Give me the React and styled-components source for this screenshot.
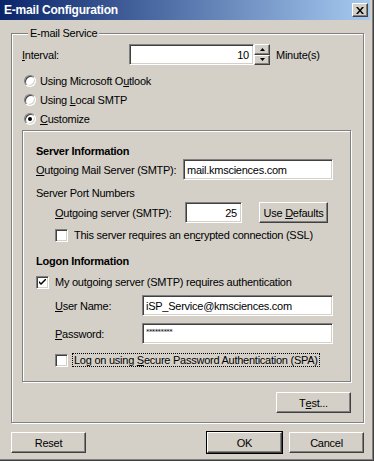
import React from "react";
import styled, { createGlobalStyle, css } from "styled-components";

const GlobalStyle = createGlobalStyle`
  html, body {
    margin: 0;
    padding: 0;
    background: #d4d0c8;
  }
  body {
    font-family: "Liberation Sans", Arial, sans-serif;
    font-size: 11px;
    letter-spacing: -0.25px;
    color: #000;
  }
  * {
    box-sizing: border-box;
  }
`;

const sunken = css`
  border: 1px solid;
  border-color: #808080 #ffffff #ffffff #808080;
  box-shadow: inset 1px 1px 0 #404040, inset -1px -1px 0 #d4d0c8;
`;

const raised = css`
  border: 1px solid;
  border-color: #ffffff #404040 #404040 #ffffff;
  box-shadow: inset -1px -1px 0 #808080, inset 1px 1px 0 #d4d0c8;
  background: #d4d0c8;
`;

const Window = styled.div`
  width: 374px;
  height: 461px;
  background: #d4d0c8;
  border-right: 1px solid #404040;
  border-bottom: 1px solid #404040;
  box-shadow: inset -1px -1px 0 #808080;
  display: flex;
  flex-direction: column;
  padding-right: 3px;
`;

const TitleBar = styled.div`
  height: 20px;
  display: flex;
  align-items: center;
  justify-content: space-between;
  padding: 0 2px 0 4px;
  background: linear-gradient(to right, #0a246a, #a6caf0);
`;

const Title = styled.span`
  color: #fff;
  font-weight: bold;
  font-size: 12px;
  letter-spacing: -0.2px;
`;

const CloseButton = styled.div`
  ${raised};
  width: 16px;
  height: 14px;
  display: flex;
  align-items: center;
  justify-content: center;
`;

const Body = styled.div`
  flex: 1;
  display: flex;
  flex-direction: column;
  padding: 7px 6px 0 11px;
`;

const Group = styled.fieldset`
  margin: 0;
  padding: 4px 12px 9px 10px;
  border: 1px solid #808080;
  box-shadow: inset 1px 1px 0 #fff, 1px 1px 0 #fff;
  display: flex;
  flex-direction: column;
`;

const Legend = styled.legend`
  margin-left: 6px;
  padding: 0 2px;
  line-height: 13px;
  background: #d4d0c8;
`;

const Row = styled.div`
  display: flex;
  align-items: center;
  height: ${(p) => p.$h || 21}px;
  margin-top: ${(p) => p.$mt || 0}px;
  padding-left: ${(p) => p.$indent || 0}px;
`;

const Label = styled.span`
  width: ${(p) => (p.$w ? `${p.$w}px` : "auto")};
  flex: none;
  white-space: nowrap;
`;

const TextBox = styled.div`
  ${sunken};
  background: #fff;
  width: ${(p) => p.$w}px;
  height: 21px;
  display: flex;
  align-items: center;
  justify-content: ${(p) => (p.$right ? "flex-end" : "flex-start")};
  padding: 0 4px 0 3px;
  white-space: nowrap;
`;

const Masked = styled.span`
  font-family: "DejaVu Sans", sans-serif;
  font-size: 7px;
  letter-spacing: -0.6px;
  margin-top: -3px;
`;

const Spinner = styled.div`
  display: flex;
  flex-direction: column;
  width: 16px;
  height: 21px;
  margin-right: 6px;
`;

const SpinButton = styled.div`
  ${raised};
  flex: 1;
  display: flex;
  align-items: center;
  justify-content: center;
`;

const RadioList = styled.div`
  margin-top: 6px;
`;

const RadioRow = styled.label`
  display: flex;
  align-items: center;
  height: 19px;
  padding-left: 2px;
  gap: 4px;
`;

const RadioCircle = styled.span`
  width: 12px;
  height: 12px;
  border-radius: 50%;
  border: 1px solid;
  border-color: #808080 #ffffff #ffffff #808080;
  box-shadow: inset 1px 1px 0 #404040, inset -1px -1px 0 #d4d0c8;
  background: #fff;
  display: flex;
  align-items: center;
  justify-content: center;
  &::after {
    content: "";
    width: 4px;
    height: 4px;
    border-radius: 50%;
    background: ${(p) => (p.$on ? "#000" : "transparent")};
  }
`;

const InnerGroup = styled.div`
  margin-top: 2px;
  border: 1px solid #808080;
  box-shadow: inset 1px 1px 0 #fff, 1px 1px 0 #fff;
  padding: 13px 16px 13px 13px;
  display: flex;
  flex-direction: column;
`;

const Heading = styled.div`
  font-weight: bold;
  height: 14px;
  line-height: 14px;
  margin-top: ${(p) => p.$mt || 0}px;
`;

const CheckRow = styled.label`
  display: flex;
  align-items: center;
  gap: 5px;
  height: 16px;
  margin-top: ${(p) => p.$mt || 0}px;
  padding-left: ${(p) => p.$indent || 0}px;
`;

const CheckBox = styled.span`
  ${sunken};
  width: 13px;
  height: 13px;
  background: #fff;
  flex: none;
  display: flex;
  align-items: center;
  justify-content: center;
`;

const CheckText = styled.span`
  padding: 0 1px;
  outline: ${(p) => (p.$focus ? "1px dotted #000" : "none")};
  white-space: nowrap;
`;

const Button = styled.div`
  ${raised};
  width: ${(p) => p.$w || 75}px;
  height: 21px;
  display: flex;
  align-items: center;
  justify-content: center;
  margin-left: ${(p) => p.$ml || 0}px;
  ${(p) =>
    p.$default &&
    css`
      outline: 1px solid #000;
      outline-offset: 0;
    `}
`;

const TestRow = styled.div`
  display: flex;
  justify-content: flex-end;
  margin-top: 10px;
`;

const Footer = styled.div`
  display: flex;
  align-items: center;
  margin-top: 9px;
`;

const Spacer = styled.div`
  flex: 1;
`;

const Arrow = ({ down }) => (
  <svg width="5" height="3" viewBox="0 0 5 3">
    <path d={down ? "M0 0h5L2.5 3z" : "M2.5 0L5 3H0z"} fill="#000" />
  </svg>
);

const Check = () => (
  <svg width="7" height="7" viewBox="0 0 7 7">
    <path d="M0 2 L0 4 L2 6 L7 1 L7 -1 L2 4 Z" fill="#000" />
  </svg>
);

const radios = [
  { label: <>Using Microsoft O<u>u</u>tlook</>, on: false },
  { label: <>Using <u>L</u>ocal SMTP</>, on: false },
  { label: <><u>C</u>ustomize</>, on: true },
];

export default function App() {
  return (
    <>
      <GlobalStyle />
      <Window>
        <TitleBar>
          <Title>E-mail Configuration</Title>
          <CloseButton>
            <svg width="8" height="7" viewBox="0 0 8 7">
              <path d="M0 0h2l2 2.5L6 0h2L5 3.5 8 7H6L4 4.5 2 7H0l3-3.5z" fill="#000" />
            </svg>
          </CloseButton>
        </TitleBar>
        <Body>
          <Group>
            <Legend>E-mail Service</Legend>
            <Row>
              <Label $w={107}>
                <u>I</u>nterval:
              </Label>
              <TextBox $w={125} $right>
                10
              </TextBox>
              <Spinner>
                <SpinButton>
                  <Arrow />
                </SpinButton>
                <SpinButton>
                  <Arrow down />
                </SpinButton>
              </Spinner>
              <Label>Minute(s)</Label>
            </Row>
            <RadioList>
              {radios.map((r, i) => (
                <RadioRow key={i}>
                  <RadioCircle $on={r.on} />
                  <span>{r.label}</span>
                </RadioRow>
              ))}
            </RadioList>
            <InnerGroup>
              <Heading>Server Information</Heading>
              <Row $mt={1}>
                <Label $w={147}>
                  <u>O</u>utgoing Mail Server (SMTP):
                </Label>
                <TextBox $w={150}>mail.kmsciences.com</TextBox>
              </Row>
              <Row $h={14} $mt={6}>
                <Label>Server Port Numbers</Label>
              </Row>
              <Row $mt={2} $indent={19}>
                <Label $w={130}>
                  <u>O</u>utgoing server (SMTP):
                </Label>
                <TextBox $w={57} $right>
                  25
                </TextBox>
                <Button $w={69} $ml={17}>
                  Use&nbsp;<u>D</u>efaults
                </Button>
              </Row>
              <CheckRow $mt={4} $indent={19}>
                <CheckBox />
                <CheckText>
                  This server requires an en<u>c</u>rypted connection (SSL)
                </CheckText>
              </CheckRow>
              <Heading $mt={11}>Logon Information</Heading>
              <CheckRow $mt={6}>
                <CheckBox>
                  <Check />
                </CheckBox>
                <CheckText>
                  My outgoing server (SMTP) requires authentication
                </CheckText>
              </CheckRow>
              <Row $mt={5} $indent={19}>
                <Label $w={87}>
                  <u>U</u>ser Name:
                </Label>
                <TextBox $w={191}>iSP_Service@kmsciences.com</TextBox>
              </Row>
              <Row $mt={7} $indent={19}>
                <Label $w={87}>
                  <u>P</u>assword:
                </Label>
                <TextBox $w={191}>
                  <Masked>*********</Masked>
                </TextBox>
              </Row>
              <CheckRow $mt={8} $indent={19}>
                <CheckBox />
                <CheckText $focus>
                  Log on using <u>S</u>ecure Password Authentication (SPA)
                </CheckText>
              </CheckRow>
            </InnerGroup>
            <TestRow>
              <Button>
                T<u>e</u>st...
              </Button>
            </TestRow>
          </Group>
          <Footer>
            <Button>Reset</Button>
            <Spacer />
            <Button $default>OK</Button>
            <Button $ml={7}>Cancel</Button>
          </Footer>
        </Body>
      </Window>
    </>
  );
}
